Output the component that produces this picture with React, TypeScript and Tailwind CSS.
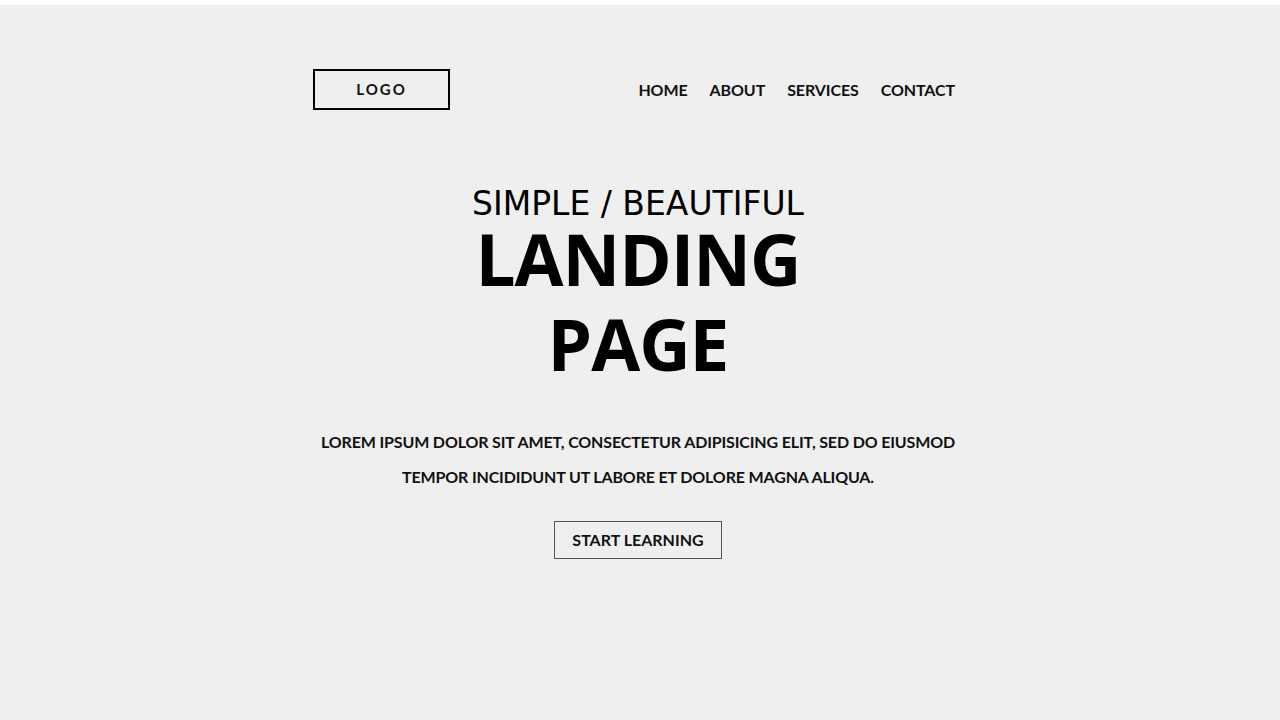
import React from "react";

export default function App() {
  return (
    <div className="min-h-screen w-full bg-[#efefef] border-t-[5px] border-white text-[#111]">
      <header className="flex justify-center pr-[12px] pt-[64px]">
        <div className="flex w-[642px] items-center justify-between">
          <div className="flex h-[41px] w-[137px] items-center justify-center border-2 border-black font-['Lato',sans-serif] text-[15px] font-bold tracking-[2px]">
            LOGO
          </div>
          <nav className="flex items-center gap-[22px] font-['Lato',sans-serif] text-[16px] font-bold tracking-[-0.1px]">
            <a>HOME</a>
            <a>ABOUT</a>
            <a>SERVICES</a>
            <a>CONTACT</a>
          </nav>
        </div>
      </header>
      <main className="flex flex-col items-center pr-[4px] text-center">
        <div className="mt-[79px] font-['DejaVu_Sans',sans-serif] text-[33px] leading-[30px] text-black">
          SIMPLE / BEAUTIFUL
        </div>
        <h1 className="-mt-[3px] flex flex-col items-center font-['Open_Sans',sans-serif] text-[71px] font-bold leading-[85px] tracking-[-1px] text-black">
          <span>LANDING</span>
          <span>PAGE</span>
        </h1>
        <p className="mt-[38px] font-['Lato',sans-serif] text-[16px] font-bold leading-[35px] tracking-[-0.15px]">
          LOREM IPSUM DOLOR SIT AMET, CONSECTETUR ADIPISICING ELIT, SED DO EIUSMOD
          <br />
          TEMPOR INCIDIDUNT UT LABORE ET DOLORE MAGNA ALIQUA.
        </p>
        <button className="mt-[27px] h-[38px] w-[168px] border border-[#555] font-['Lato',sans-serif] text-[16px] font-bold">
          START LEARNING
        </button>
      </main>
    </div>
  );
}
